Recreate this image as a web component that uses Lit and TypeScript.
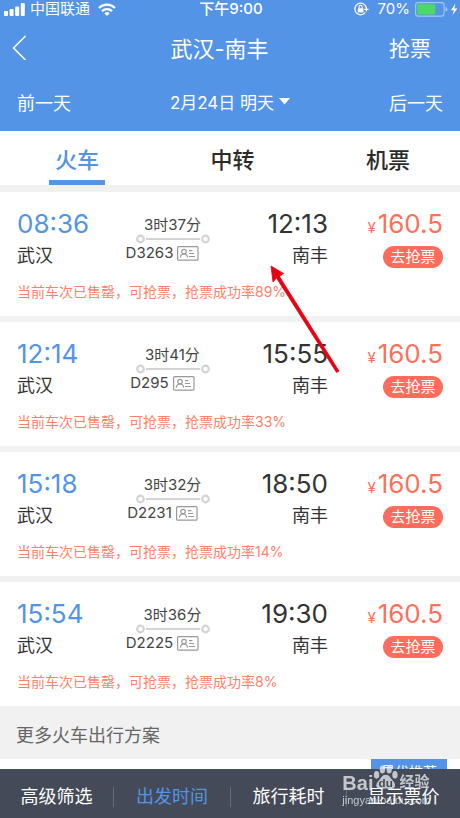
import { LitElement, html, css, svg } from "lit";
import { customElement, property, state } from "lit/decorators.js";
import { classMap } from "lit/directives/class-map.js";

interface Train {
  depart: string;
  arrive: string;
  duration: string;
  code: string;
  rate: number;
}

const TRAINS: Train[] = [
  { depart: "08:36", arrive: "12:13", duration: "3时37分", code: "D3263", rate: 89 },
  { depart: "12:14", arrive: "15:55", duration: "3时41分", code: "D295", rate: 33 },
  { depart: "15:18", arrive: "18:50", duration: "3时32分", code: "D2231", rate: 14 },
  { depart: "15:54", arrive: "19:30", duration: "3时36分", code: "D2225", rate: 8 },
];

const base = css`
  * {
    box-sizing: border-box;
  }
  button {
    margin: 0;
    padding: 0;
    border: 0;
    background: none;
    color: inherit;
    font: inherit;
    cursor: pointer;
  }
  svg {
    display: block;
    flex: none;
  }
`;

@customElement("status-bar")
export class StatusBar extends LitElement {
  static styles = [
    base,
    css`
      :host {
        display: grid;
        grid-template-columns: 1fr auto 1fr;
        align-items: center;
        height: 18px;
        padding: 0 2px 0 4px;
        font-size: 15px;
        line-height: 18px;
      }
      .side {
        display: flex;
        align-items: center;
        gap: 5px;
      }
      .wifi {
        margin-left: 3px;
      }
      .end {
        justify-content: flex-end;
      }
      .time {
        font-weight: 500;
      }
      .lock {
        margin-right: 4px;
      }
    `,
  ];

  render() {
    return html`
      <div class="side">
        <svg width="21" height="13" viewBox="0 0 21 13" fill="#fff">
          <rect x="0" y="8" width="4" height="5" rx="1" />
          <rect x="5.6" y="6" width="4" height="7" rx="1" />
          <rect x="11.2" y="3.5" width="4" height="9.5" rx="1" />
          <rect x="16.8" y="0" width="4" height="13" rx="1" />
        </svg>
        <span>中国联通</span>
        <svg class="wifi" width="18" height="13" viewBox="0 0 18 13" fill="none" stroke="#fff" stroke-width="2.2">
          <path d="M1 5A11.3 11.3 0 0 1 17 5" />
          <path d="M4 8.2A7 7 0 0 1 14 8.2" />
          <path d="M9 13L6.4 10.4A3.7 3.7 0 0 1 11.6 10.4Z" fill="#fff" stroke="none" />
        </svg>
      </div>
      <span class="time">下午9:00</span>
      <div class="side end">
        <svg class="lock" width="15" height="14" viewBox="0 0 15 14" fill="none" stroke="#fff">
          <path d="M11.2 10.600A5.800 5.800 0 1 1 12.300 5.600" stroke-width="1.3" />
          <path d="M12.400 5V9.600M10.200 7.300H14.600" stroke-width="1.3" />
          <rect x="3.800" y="6.300" width="5.600" height="4.300" rx=".5" fill="#fff" stroke="none" />
          <path d="M5 6.500V5A1.600 1.600 0 0 1 8.200 5V6.500" stroke-width="1.1" />
        </svg>
        <span>70%</span>
        <svg width="43" height="15" viewBox="0 0 43 15">
          <rect x=".6" y=".6" width="28.5" height="13.5" rx="2.6" fill="none" stroke="#a7c6ef" stroke-width="1.1" />
          <rect x="2.3" y="2.2" width="18" height="10.3" rx="1" fill="#4cd964" />
          <path d="M30.5 5Q32.5 5.5 32.5 7.4Q32.5 9.3 30.5 9.8Z" fill="#a7c6ef" />
          <path d="M40.4 1.5L36 8.2H38.8L37.6 13L42.4 6.4H39.4Z" fill="#fff" />
        </svg>
      </div>
    `;
  }
}

@customElement("train-card")
export class TrainCard extends LitElement {
  @property({ attribute: false }) train!: Train;

  static styles = [
    base,
    css`
      :host {
        display: block;
        padding: 16px 17px 14px;
        background: #fff;
      }
      .row {
        display: grid;
        grid-template-columns: 100fr 111fr 100fr 115fr;
      }
      .stop,
      .fare {
        display: flex;
        flex-direction: column;
      }
      .stop {
        color: #333;
      }
      .arrive,
      .fare {
        align-items: flex-end;
      }
      .clock,
      .price {
        font-size: 26px;
        line-height: 32px;
        white-space: nowrap;
      }
      .depart .clock {
        color: #5394e6;
      }
      .place {
        font-size: 18px;
        line-height: 32px;
      }
      .trip {
        display: flex;
        flex-direction: column;
        align-items: center;
        padding-top: 8px;
        color: #444;
        font-size: 15px;
        line-height: 18px;
      }
      .code {
        display: flex;
        align-items: center;
        gap: 4px;
        padding-right: 20px;
      }
      .price {
        color: #ff6f5a;
      }
      .yen {
        margin-right: 2px;
        font-size: 15px;
        line-height: 16px;
      }
      .grab {
        width: 60px;
        height: 22px;
        margin-top: 6px;
        border-radius: 11px;
        background: #ff6c5c;
        color: #fff;
        font-size: 15px;
        line-height: 22px;
      }
      .note {
        margin: 9px 0 0;
        color: #ff7f6a;
        font-size: 14px;
        line-height: 21px;
      }
    `,
  ];

  render() {
    const t = this.train;
    return html`
      <div class="row">
        <div class="stop depart">
          <span class="clock">${t.depart}</span>
          <span class="place">武汉</span>
        </div>
        <div class="trip">
          <span>${t.duration}</span>
          <svg width="74" height="10" viewBox="0 0 74 10" fill="none" stroke="#d3d3d3" stroke-width="2.2">
            <circle cx="4.500" cy="5" r="3.300" />
            <path d="M10 5H64" />
            <circle cx="69.500" cy="5" r="3.300" />
          </svg>
          <span class="code">
            ${t.code}
            <svg width="22" height="15" viewBox="0 0 22 15" fill="none" stroke="#999" stroke-width="1.2">
              <rect x=".6" y=".6" width="20.4" height="13.6" rx="1" />
              <circle cx="7" cy="5.6" r="2.3" />
              <path d="M3.4 11.6C3.6 9 5 8 7 8S10.300 9 10.600 11.600" />
              <path d="M12 4.600H15.500M12 7.500H17M12 10.500H18" />
            </svg>
          </span>
        </div>
        <div class="stop arrive">
          <span class="clock">${t.arrive}</span>
          <span class="place">南丰</span>
        </div>
        <div class="fare">
          <span class="price"><span class="yen">¥</span>160.5</span>
          <button class="grab">去抢票</button>
        </div>
      </div>
      <p class="note">当前车次已售罄，可抢票，抢票成功率${t.rate}%</p>
    `;
  }
}

@customElement("source-mark")
export class SourceMark extends LitElement {
  static styles = [
    base,
    css`
      :host {
        display: flex;
        flex-direction: column;
        color: rgba(238, 240, 243, 0.75);
        font-family: "Liberation Sans", "Noto Sans CJK SC", sans-serif;
        pointer-events: none;
      }
      .brand {
        display: flex;
        align-items: flex-end;
        font-size: 20px;
        font-weight: 700;
        line-height: 22px;
      }
      .cn {
        font-size: 15px;
        line-height: 20px;
        padding-bottom: 2px;
      }
      .site {
        font-size: 11px;
        line-height: 12px;
      }
      .paw {
        margin-bottom: 3px;
      }
    `,
  ];

  render() {
    return html`
      <div class="brand">
        <span>Bai</span>
        <svg class="paw" width="26" height="27" viewBox="0 0 29 28" fill="currentColor">
          <ellipse cx="4" cy="11" rx="3" ry="4.300" />
          <ellipse cx="10.500" cy="5" rx="3" ry="4.500" />
          <ellipse cx="18" cy="5" rx="3" ry="4.500" />
          <ellipse cx="24.500" cy="11" rx="3" ry="4.300" />
          <path d="M14.200 11C18.500 11 19.500 15 22.500 18C26.500 22 24.500 27 20 27C17 27 16 26.300 14.200 26.300S11 27 8.500 27C3.500 27 2 22 6 18C9 15 10 11 14.200 11Z" />
          ${svg`<text x="14.200" y="25" text-anchor="middle" font-size="13" font-weight="700" fill="#444a57">du</text>`}
        </svg>
        <span class="cn">经验</span>
      </div>
      <span class="site">jingyan.baidu.com</span>
    `;
  }
}

@customElement("app-root")
export class AppRoot extends LitElement {
  @state() private tab = "火车";
  @state() private sort = "出发时间";

  static styles = [
    base,
    css`
      :host {
        position: relative;
        display: flex;
        flex-direction: column;
        height: 100vh;
        overflow: hidden;
        background: #fff;
        font-family: Inter, "Noto Sans CJK SC", sans-serif;
      }
      .header {
        flex: none;
        background: #5394e6;
        color: #fff;
      }
      .nav,
      .dates {
        display: grid;
        grid-template-columns: 1fr auto 1fr;
        align-items: center;
        justify-items: start;
      }
      .nav {
        height: 58px;
        padding: 0 29px 0 12px;
        font-size: 21px;
      }
      .title {
        margin: 0;
        padding-right: 4px;
        font-size: 22px;
        font-weight: 400;
      }
      .dates {
        height: 55px;
        padding: 0 17px 4px;
        font-size: 18px;
      }
      .last {
        justify-self: end;
      }
      .date {
        display: flex;
        align-items: center;
        gap: 5px;
        font-size: 17px;
      }
      .tabs {
        display: flex;
        flex: none;
        height: 54px;
        padding: 0 44px 0 49px;
        justify-content: space-between;
      }
      .tab {
        padding: 4px 6px 0;
        border-bottom: 5px solid transparent;
        color: #2b2b2b;
        font-size: 22px;
        font-weight: 500;
      }
      .tab.on {
        border-color: #5394e6;
        color: #5394e6;
      }
      .content {
        flex: 1;
        min-height: 0;
        overflow-y: auto;
        scrollbar-width: none;
        background: #f1f1f1;
      }
      .list {
        display: flex;
        flex-direction: column;
        gap: 6px;
        margin: 0;
        padding: 7px 0 0;
        list-style: none;
      }
      .more {
        margin: 0;
        padding: 6px 16px 0;
        color: #666;
        font-size: 18px;
        font-weight: 400;
        line-height: 47px;
      }
      .plan {
        display: flex;
        justify-content: flex-end;
        height: 120px;
        padding: 0 13px;
        background: #fff;
      }
      .best {
        height: 26px;
        padding: 0 10px;
        background: #5394e6;
        color: #fff;
        font-size: 14px;
        line-height: 26px;
      }
      .bar {
        display: grid;
        grid-template-columns: 113fr 117fr 116fr 114fr;
        flex: none;
        height: 49px;
        padding-top: 6px;
        align-items: center;
        background: #444a57;
        color: #fff;
      }
      .sort {
        height: 20px;
        font-size: 18px;
        line-height: 20px;
        white-space: nowrap;
      }
      .sort + .sort {
        border-left: 1px solid #666b76;
      }
      .sort.on {
        color: #5394e6;
      }
      .pointer {
        position: absolute;
        left: 268px;
        top: 262px;
      }
      .mark {
        position: absolute;
        right: 29px;
        bottom: 12px;
      }
    `,
  ];

  render() {
    return html`
      <header class="header">
        <status-bar></status-bar>
        <div class="nav">
          <button aria-label="返回">
            <svg width="15" height="26" viewBox="0 0 15 26" fill="none" stroke="#fff" stroke-width="1.500">
              <path d="M13.500 2L1.500 14L13.500 26" />
            </svg>
          </button>
          <h1 class="title">武汉-南丰</h1>
          <button class="last">抢票</button>
        </div>
        <div class="dates">
          <button>前一天</button>
          <button class="date">
            2月24日 明天
            <svg width="11" height="7" viewBox="0 0 11 7" fill="#fff"><path d="M0 0H11L5.500 6.500Z" /></svg>
          </button>
          <button class="last">后一天</button>
        </div>
      </header>
      <nav class="tabs">
        ${["火车", "中转", "机票"].map(
          (name) => html`<button
            class=${classMap({ tab: true, on: name === this.tab })}
            @click=${() => (this.tab = name)}
          >${name}</button>`,
        )}
      </nav>
      <main class="content">
        <ul class="list">
          ${TRAINS.map((t) => html`<li><train-card .train=${t}></train-card></li>`)}
        </ul>
        <h2 class="more">更多火车出行方案</h2>
        <div class="plan"><span class="best">最优推荐</span></div>
      </main>
      <footer class="bar">
        ${["高级筛选", "出发时间", "旅行耗时", "显示票价"].map(
          (name) => html`<button
            class=${classMap({ sort: true, on: name === this.sort })}
            @click=${() => (this.sort = name)}
          >${name}</button>`,
        )}
      </footer>
      <svg class="pointer" width="74" height="114" viewBox="0 0 74 114" fill="#e60012">
        <path d="M3 4L15.500 11.500L11.500 14.500L71 109L68.500 110.500L8.500 16L5 20Z" stroke="#e60012" stroke-width=".8" />
      </svg>
      <source-mark class="mark"></source-mark>
    `;
  }
}
